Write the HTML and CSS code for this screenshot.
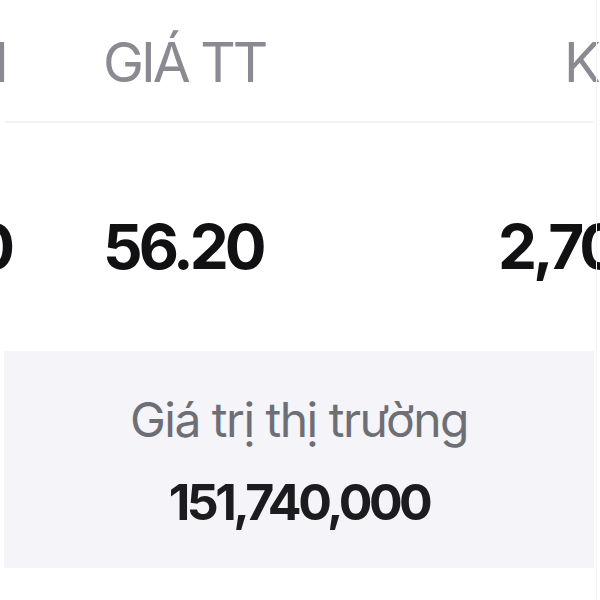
FILE: index.html
```html
<!DOCTYPE html>
<html lang="vi">
<head>
<meta charset="utf-8">
<link rel="stylesheet" href="styles.css">
</head>
<body>
<div class="screen">
  <div class="table">
    <div class="row head">
      <div class="cell c1">N</div>
      <div class="cell c2">GIÁ TT</div>
      <div class="cell c3">KL</div>
    </div>
    <div class="divider"></div>
    <div class="row vals">
      <div class="cell c1">0</div>
      <div class="cell c2">56.20</div>
      <div class="cell c3">2,700</div>
    </div>
  </div>
  <div class="panel">
    <div class="panel-label">Giá trị thị trường</div>
    <div class="panel-value">151,740,000</div>
  </div>
  <div class="edge"></div>
</div>
</body>
</html>
```
FILE: styles.css
```css
html, body {
  margin: 0;
  padding: 0;
  background: #ffffff;
}
body {
  font-family: "Inter", "Liberation Sans", sans-serif;
  width: 600px;
  height: 600px;
  overflow: hidden;
}
.screen {
  position: relative;
  width: 600px;
  height: 600px;
  overflow: hidden;
}
.table {
  display: flex;
  flex-direction: column;
}
.row {
  display: grid;
  grid-template-columns: 103px 395px 200px;
  white-space: nowrap;
}
.cell.c1 {
  text-align: right;
}
.head {
  padding-top: 35px;
  height: 121px;
  box-sizing: border-box;
  font-size: 55px;
  line-height: 55px;
  letter-spacing: -3px;
  color: #8a8a93;
  font-weight: 400;
}
.head .c1 {
  margin-right: 97px;
  margin-left: -60px;
}
.head .c3 {
  padding-left: 66px;
}
.divider {
  height: 2px;
  margin: 0 7px 0 5px;
  background: #f2f2f4;
}
.vals {
  padding-top: 93px;
  font-size: 62px;
  line-height: 62px;
  letter-spacing: -4px;
  font-weight: 700;
  color: #111114;
}
.vals .c1 {
  margin-right: 92px;
  margin-left: -60px;
}
.panel {
  margin: 73px 6px 0 4px;
  height: 217px;
  background: #f4f4f9;
  display: flex;
  flex-direction: column;
  align-items: center;
  box-sizing: border-box;
  padding-top: 45px;
}
.panel-label {
  font-size: 48px;
  line-height: 48px;
  letter-spacing: -1.5px;
  color: #6e6e75;
  font-weight: 400;
}
.panel-value {
  margin-top: 33px;
  font-size: 50px;
  line-height: 50px;
  letter-spacing: -3.5px;
  font-weight: 700;
  color: #1c1c1e;
}
.edge {
  position: absolute;
  right: 3px;
  top: 0;
  width: 1px;
  height: 600px;
  background: #f3f3f5;
}
```
